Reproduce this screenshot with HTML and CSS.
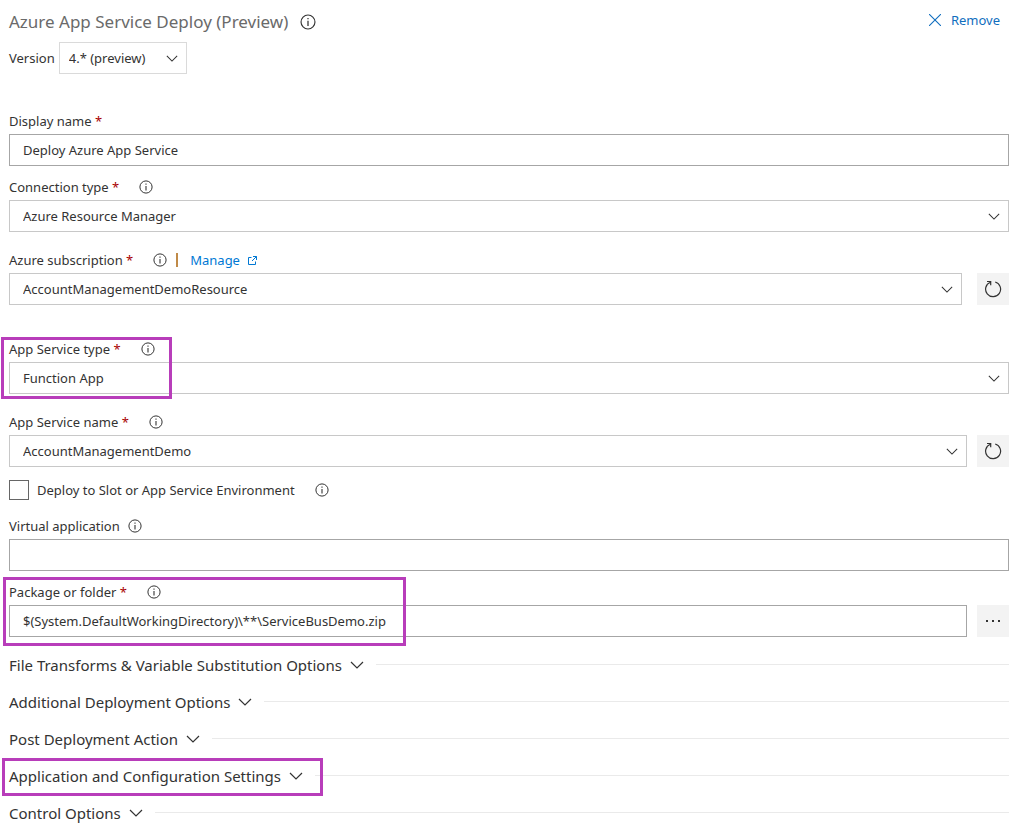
FILE: index.html
```html
<!DOCTYPE html>
<html lang="en">
<head>
<meta charset="utf-8">
<title>Azure App Service Deploy</title>
<link rel="stylesheet" href="styles.css">
</head>
<body>
<svg class="symbols" aria-hidden="true">
  <symbol id="info" viewBox="0 0 14 14"><circle cx="7" cy="7" r="6.1" fill="none" stroke="currentColor" stroke-width="1"/><path d="M7 6v4.5M7 3.4v1.3" fill="none" stroke="currentColor" stroke-width="1.1"/></symbol>
  <symbol id="chevron" viewBox="0 0 14 8"><path d="M1 1l6 6 6-6" fill="none" stroke="currentColor" stroke-width="1.2"/></symbol>
  <symbol id="refresh" viewBox="0 0 18 18"><path d="M11.2 2A7.5 7.5 0 1 1 6.4 2.2M3 1.5h3.7v3.8" fill="none" stroke="currentColor" stroke-width="1.2"/></symbol>
</svg>
<form class="task">
  <header class="task-header">
    <h1 class="title">Azure App Service Deploy (Preview)</h1>
    <svg class="info info-large"><use href="#info"/></svg>
    <button class="remove" type="button">
      <svg class="remove-icon" viewBox="0 0 12 12"><path d="M0 0l12 12M12 0L0 12" fill="none" stroke="currentColor" stroke-width="1.1"/></svg>
      Remove
    </button>
  </header>
  <div class="version">
    <label for="version">Version</label>
    <div class="select version-select"><select id="version"><option>4.* (preview)</option></select><svg class="chevron"><use href="#chevron"/></svg></div>
  </div>

  <div class="field">
    <div class="label-row"><label for="display">Display name <span class="required">*</span></label></div>
    <input class="text" id="display" type="text" value="Deploy Azure App Service">
  </div>
  <div class="field tight">
    <div class="label-row"><label for="connection">Connection type <span class="required">*</span></label><svg class="info"><use href="#info"/></svg></div>
    <div class="select"><select id="connection"><option>Azure Resource Manager</option></select><svg class="chevron"><use href="#chevron"/></svg></div>
  </div>
  <div class="field normal">
    <div class="label-row"><label for="subscription">Azure subscription <span class="required">*</span></label><svg class="info"><use href="#info"/></svg><span class="divider"></span>
      <a class="manage" href="#">Manage <svg class="external" viewBox="0 0 9 9"><path d="M3.5 1.5h-3v7h7v-3M5 .5h3.5V4M8.5.5L4 5" fill="none" stroke="currentColor"/></svg></a></div>
    <div class="control-row wide-gap">
      <div class="select"><select id="subscription"><option>AccountManagementDemoResource</option></select><svg class="chevron"><use href="#chevron"/></svg></div>
      <button class="square" type="button" aria-label="Refresh subscriptions"><svg class="refresh"><use href="#refresh"/></svg></button>
    </div>
  </div>
  <div class="field loose">
    <div class="label-row"><label for="type">App Service type <span class="required">*</span></label><svg class="info"><use href="#info"/></svg></div>
    <div class="select"><select id="type"><option>Function App</option></select><svg class="chevron"><use href="#chevron"/></svg></div>
    <span class="highlight highlight-type"></span>
  </div>
  <div class="field normal">
    <div class="label-row"><label for="name">App Service name <span class="required">*</span></label><svg class="info"><use href="#info"/></svg></div>
    <div class="control-row">
      <div class="select"><select id="name"><option>AccountManagementDemo</option></select><svg class="chevron"><use href="#chevron"/></svg></div>
      <button class="square" type="button" aria-label="Refresh app services"><svg class="refresh"><use href="#refresh"/></svg></button>
    </div>
  </div>
  <div class="check-row">
    <input class="check" id="slot" type="checkbox"><label for="slot">Deploy to Slot or App Service Environment</label><svg class="info"><use href="#info"/></svg>
  </div>
  <div class="field">
    <div class="label-row optional"><label for="virtual">Virtual application</label><svg class="info"><use href="#info"/></svg></div>
    <input class="text" id="virtual" type="text">
  </div>
  <div class="field tight">
    <div class="label-row"><label for="package">Package or folder <span class="required">*</span></label><svg class="info"><use href="#info"/></svg></div>
    <div class="control-row">
      <input class="text" id="package" type="text" value="$(System.DefaultWorkingDirectory)\**\ServiceBusDemo.zip">
      <button class="square" type="button" aria-label="Browse"><svg class="dots" viewBox="0 0 14 2"><path d="M0 0h2v2H0zM6 0h2v2H6zM12 0h2v2h-2z" fill="currentColor"/></svg></button>
    </div>
    <span class="highlight highlight-package"></span>
  </div>

  <div class="sections">
    <div class="section"><button class="section-button" type="button">File Transforms &amp; Variable Substitution Options<svg class="chevron-large"><use href="#chevron"/></svg></button></div>
    <div class="section"><button class="section-button" type="button">Additional Deployment Options<svg class="chevron-large"><use href="#chevron"/></svg></button></div>
    <div class="section"><button class="section-button" type="button">Post Deployment Action<svg class="chevron-large"><use href="#chevron"/></svg></button></div>
    <div class="section"><button class="section-button" type="button">Application and Configuration Settings<svg class="chevron-large"><use href="#chevron"/></svg></button><span class="highlight highlight-section"></span></div>
    <div class="section"><button class="section-button" type="button">Control Options<svg class="chevron-large"><use href="#chevron"/></svg></button></div>
  </div>
</form>
</body>
</html>
```
FILE: styles.css
```css
* { box-sizing: border-box; }
body { margin: 0; background: #fff; color: #333; font: 13px/20px "Noto Sans", "Open Sans", sans-serif; }
button, input, select { margin: 0; font: inherit; color: inherit; border-radius: 0; }
button { border: 0; padding: 0; background: none; cursor: pointer; }
svg { display: block; flex: none; }
.symbols { position: absolute; width: 0; height: 0; }
.task { padding: 8px 20px 8px 9px; }
.task-header { display: flex; align-items: center; height: 28px; gap: 12px; }
.title { margin: 0; font-size: 17px; line-height: 28px; font-weight: 400; color: #6a6a6a; }
.remove { display: flex; align-items: center; gap: 10px; margin: 0 9px 4px auto; color: #106ebe; }
.remove-icon { width: 12px; height: 12px; }
.info { width: 14px; height: 14px; }
.info-large { width: 16px; height: 16px; }
.version { display: flex; align-items: center; gap: 4px; margin: 6px 0 37px; }
.version-select { width: 128px; }
.select { display: grid; align-items: center; flex: 1; }
.version .select { flex: none; }
.select select, .chevron { grid-area: 1 / 1; }
.select select { appearance: none; width: 100%; height: 32px; padding: 0 30px 0 13px; border: 1px solid #c8c8c8; background: #fff; }
.version-select select { padding-left: 9px; border-color: #dadada; }
.chevron { justify-self: end; width: 12px; height: 7px; margin-right: 9px; pointer-events: none; }
.field { position: relative; display: flex; flex-direction: column; gap: 3px; }
.field > .select { flex: none; }
.tight { margin-top: 11px; }
.normal { margin-top: 18px; }
.loose { margin-top: 34px; }
.label-row { display: flex; align-items: center; height: 20px; gap: 20px; }
.optional { gap: 8px; }
.required { color: #a80000; }
.divider { width: 2px; height: 14px; margin: 0 -8px 0 -11px; background: #c08a48; }
.manage { display: flex; align-items: center; gap: 8px; color: #0078d4; text-decoration: none; }
.external { width: 9px; height: 9px; }
.control-row { display: flex; gap: 10px; }
.wide-gap { gap: 15px; }
.text { width: 100%; min-width: 0; height: 32px; padding: 0 13px; border: 1px solid #a6a6a6; background: #fff; }
.control-row .text { flex: 1; }
.square { display: grid; place-items: center; flex: none; width: 32px; height: 32px; background: #f3f3f3; }
.refresh { width: 18px; height: 18px; }
.dots { width: 14px; height: 2px; }
.check-row { display: flex; align-items: center; gap: 8px; margin: 13px 0 16px; }
.check-row .info { margin-left: 12px; }
.check { appearance: none; width: 20px; height: 20px; border: 1px solid #666; background: #fff; }
.sections { margin-top: 9px; }
.section { position: relative; display: flex; align-items: center; gap: 12px; height: 37px; }
.section::after { content: ""; flex: 1; height: 1px; background: #eaeaea; }
.section-button { display: flex; align-items: center; gap: 8px; font-size: 15px; line-height: 24px; }
.chevron-large { width: 14px; height: 8px; }
.highlight { position: absolute; border: 3px solid #b83dba; pointer-events: none; }
.highlight-type { left: -8px; top: -2px; width: 171px; height: 62px; }
.highlight-package { left: -6px; top: -5px; width: 403px; height: 69px; }
.highlight-section { left: -7px; top: 1px; width: 321px; height: 38px; }
```
